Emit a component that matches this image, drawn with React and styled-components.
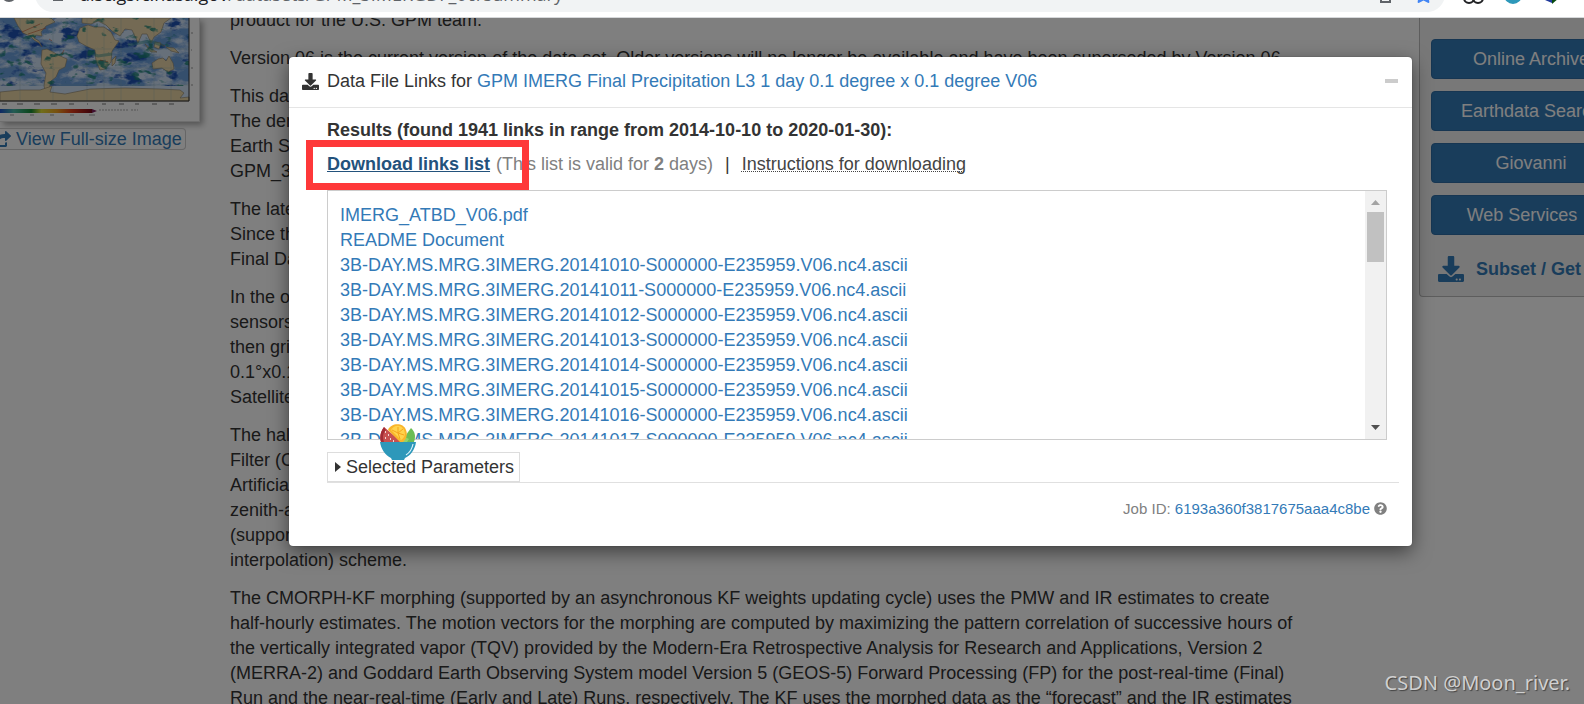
import React from "react";
import styled, { createGlobalStyle } from "styled-components";
import { FaDownload, FaQuestionCircle, FaShareSquare, FaStar } from "react-icons/fa";

const GlobalStyle = createGlobalStyle`
  *, *::before, *::after { box-sizing: border-box; }
  body {
    margin: 0;
    font-family: "Liberation Sans", Arial, sans-serif;
    font-size: 18px;
    line-height: 25px;
    color: #333;
    background: #fff;
  }
  a { color: #337ab7; text-decoration: none; }
  button { font: inherit; cursor: pointer; }
`;

const Window = styled.div`
  height: 100vh;
  display: flex;
  flex-direction: column;
  overflow: hidden;
`;

/* ---------- browser toolbar ---------- */

const BrowserBar = styled.header`
  flex: none;
  height: 18px;
  display: flex;
  align-items: flex-end;
  overflow: hidden;
  background: #fff;
  border-bottom: 1px solid #d6d8da;
`;

const BarIcons = styled.div`
  flex: none;
  width: ${(p) => p.$width}px;
  height: 36px;
`;

const AddressPill = styled.div`
  flex: 1;
  min-width: 0;
  height: 36px;
  margin-bottom: 5px;
  padding: 0 12px 0 16px;
  display: flex;
  align-items: center;
  gap: 14px;
  border-radius: 18px;
  background: #f1f3f4;
`;

const Address = styled.span`
  flex: 1;
  font-family: "Open Sans", "Noto Sans", sans-serif;
  font-size: 18px;
  color: #5f6368;
  white-space: nowrap;
`;

const Host = styled.span`
  color: #202124;
`;

const PillActions = styled.div`
  display: flex;
  align-items: center;
  gap: 22px;
`;

/* ---------- page ---------- */

const Viewport = styled.main`
  flex: 1;
  position: relative;
  overflow: hidden;
`;

const Page = styled.div`
  display: flex;
  align-items: flex-start;
`;

const PreviewColumn = styled.aside`
  flex: none;
  width: 230px;
`;

const Thumbnail = styled.div`
  width: 200px;
  height: 104px;
  background: #fff;
  border-right: 1px solid #ddd;
  border-bottom: 1px solid #ddd;
  box-shadow: 3px 3px 6px #aaa;
`;

const FullSizeLink = styled.a`
  display: flex;
  align-items: center;
  gap: 5px;
  width: 186px;
  height: 22px;
  margin-top: 6px;
  overflow: hidden;
  border: 1px solid #ccc;
  border-left: 0;
  border-radius: 0 4px 4px 0;
  white-space: nowrap;
  svg { flex: none; width: 18px; height: 18px; margin-left: -7px; }
`;

const Article = styled.article`
  flex: 1;
  min-width: 0;
  margin-top: -10px;
  p { margin: 0 0 13px; }
`;

const Line = styled.span`
  display: block;
  white-space: nowrap;
`;

const Sidebar = styled.aside`
  flex: none;
  width: 165px;
  height: 279px;
  padding: 21px 0 0 11px;
  background: #f0f0f0;
  border: 1px solid #bbb;
  border-width: 0 0 1px 1px;
  border-bottom-left-radius: 4px;
  overflow: hidden;
`;

const SidebarStack = styled.div`
  width: 200px;
  display: flex;
  flex-direction: column;
  gap: 12px;
`;

const AccessButton = styled.button`
  display: flex;
  align-items: center;
  justify-content: center;
  gap: 8px;
  height: 40px;
  padding: 0;
  color: #fff;
  background: #337ab7;
  border: 1px solid #2e6da4;
  border-radius: 4px;
`;

const Caret = styled.span`
  border: 5px solid transparent;
  border-top-color: #fff;
  border-bottom: 0;
`;

const SubsetLink = styled.a`
  display: flex;
  align-items: center;
  gap: 12px;
  height: 44px;
  padding-left: 7px;
  font-weight: bold;
  white-space: nowrap;
  svg { width: 26px; height: 26px; }
`;

/* ---------- modal ---------- */

const Backdrop = styled.div`
  position: absolute;
  inset: 0;
  padding: 39px 172px 0 289px;
  background: rgba(0, 0, 0, 0.5);
`;

const Modal = styled.section`
  background: #fff;
  border-radius: 4px;
  box-shadow: 0 6px 19px rgba(0, 0, 0, 0.5), 0 0 1px rgba(0, 0, 0, 0.6);
`;

const ModalHeader = styled.div`
  display: flex;
  align-items: center;
  gap: 8px;
  height: 51px;
  padding: 0 14px 2px 13px;
  border-bottom: 1px solid #e5e5e5;
  > svg { width: 17px; height: 17px; }
`;

const ModalTitle = styled.h4`
  flex: 1;
  margin: 0;
  font-size: inherit;
  font-weight: normal;
`;

const MinimizeButton = styled.button`
  width: 13px;
  height: 4px;
  padding: 0;
  border: 0;
  background: #ccc;
`;

const ModalBody = styled.div`
  padding: 10px 25px 25px 38px;
`;

const Results = styled.div`
  font-weight: bold;
`;

const DownloadRow = styled.div`
  position: relative;
  display: flex;
  align-items: center;
  height: 25px;
  margin: 9px 0 13px;
  white-space: pre;
`;

const DownloadLink = styled.a`
  margin-right: 6px;
  font-weight: bold;
  color: #23527c;
  text-decoration: underline;
`;

const Muted = styled.span`
  color: #808080;
`;

const Separator = styled.span`
  margin: 0 12px;
`;

const Instructions = styled.a`
  color: #444;
  text-decoration: underline dotted 1px;
  text-decoration-skip-ink: none;
`;

const Highlight = styled.div`
  position: absolute;
  top: -12px;
  left: -21px;
  width: 223px;
  height: 50px;
  border: 7px solid #fe3839;
  pointer-events: none;
`;

const LinkBox = styled.div`
  position: relative;
  display: flex;
  height: 250px;
  border: 1px solid #ccc;
`;

const LinkList = styled.ul`
  flex: 1;
  margin: 0;
  padding: 12px 13px 0 12px;
  list-style: none;
  overflow: hidden;
`;

const Scrollbar = styled.div`
  width: 21px;
  display: flex;
  flex-direction: column;
  align-items: center;
  background: #f1f1f1;
  svg { width: 9px; height: 5px; margin: 9px 0 7px; }
  svg:last-child { margin: auto 0 9px; }
`;

const Thumb = styled.div`
  width: 17px;
  height: 50px;
  background: #c1c1c1;
`;

const Bowl = styled.svg`
  position: absolute;
  left: 52px;
  top: 233px;
  width: 36px;
  height: 36px;
`;

const ParametersRow = styled.div`
  margin: 12px -12px 13px 0;
  border-bottom: 1px solid #e0e0e0;
`;

const ParametersButton = styled.button`
  display: flex;
  align-items: center;
  gap: 5px;
  height: 30px;
  padding: 0 5px 0 7px;
  color: #333;
  background: #fff;
  border: 1px solid #ddd;
  svg { width: 6px; height: 10px; }
`;

const JobRow = styled.div`
  display: flex;
  align-items: center;
  justify-content: flex-end;
  gap: 4px;
  font-size: 15px;
  color: #808080;
  svg { width: 13px; height: 13px; }
`;

const Watermark = styled.div`
  position: absolute;
  right: 14px;
  bottom: 9px;
  font-family: "Noto Sans", sans-serif;
  font-size: 20px;
  color: #d0d0d0;
  text-shadow: 1px 1px 1px #444;
`;

/* ---------- data ---------- */

const PARAGRAPHS = [
  ["product for the U.S. GPM team."],
  [
    "Version 06 is the current version of the data set. Older versions will no longer be available and have been superseded by Version 06.",
  ],
  [
    "This dataset is the GPM Level 3 IMERG Final Daily 10 x 10 km derived from the half-hourly GPM_3IMERGHH.",
    "The derived result represents the final estimate of the daily accumulated precipitation at the NASA Goddard",
    "Earth Sciences Data and Information Services Center by summing the valid precipitation retrievals in",
    "GPM_3IMERGHH and giving the result in mm.",
  ],
  [
    "The latency of the derived Final Daily product depends on the delivery of the IMERG Final product.",
    "Since the target latency for the Final is 3.5 months, it is also the latency of the",
    "Final Daily product.",
  ],
  [
    "In the original IMERG algorithm, the precipitation estimates from the various passive microwave",
    "sensors comprising the GPM constellation are computed using the Goddard Profiling Algorithm,",
    "then gridded and intercalibrated to the GPM Combined product, and combined into half-hourly",
    "0.1°x0.1° fields calibrated with the Global Precipitation Climatology Project",
    "Satellite-Gauge product.",
  ],
  [
    "The half-hourly intercalibrated estimates are then input to both the CPC Morphing-Kalman",
    "Filter (CMORPH-KF) time interpolation scheme and the estimation scheme using",
    "Artificial Neural Networks. In parallel, CPC assembles the",
    "zenith-angle-corrected, intercalibrated geo-IR fields for use in both schemes",
    "(supported by an asynchronous weights updating cycle and time",
    "interpolation) scheme.",
  ],
  [
    "The CMORPH-KF morphing (supported by an asynchronous KF weights updating cycle) uses the PMW and IR estimates to create",
    "half-hourly estimates. The motion vectors for the morphing are computed by maximizing the pattern correlation of successive hours of",
    "the vertically integrated vapor (TQV) provided by the Modern-Era Retrospective Analysis for Research and Applications, Version 2",
    "(MERRA-2) and Goddard Earth Observing System model Version 5 (GEOS-5) Forward Processing (FP) for the post-real-time (Final)",
    "Run and the near-real-time (Early and Late) Runs, respectively. The KF uses the morphed data as the “forecast” and the IR estimates",
  ],
];

const ACCESS = [
  { label: "Online Archive" },
  { label: "Earthdata Search" },
  { label: "Giovanni" },
  { label: "Web Services", menu: true },
];

const FILES = [
  "IMERG_ATBD_V06.pdf",
  "README Document",
  ...[10, 11, 12, 13, 14, 15, 16, 17].map(
    (day) => `3B-DAY.MS.MRG.3IMERG.201410${day}-S000000-E235959.V06.nc4.ascii`
  ),
];

/* ---------- drawings ---------- */

function PrecipitationMap() {
  return (
    <svg width="199" height="103" viewBox="0 0 199 103" aria-label="Precipitation map">
      <defs>
        <filter id="rain" x="0" y="0" width="100%" height="100%" colorInterpolationFilters="sRGB">
          <feTurbulence type="fractalNoise" baseFrequency="0.04 0.08" numOctaves="5" seed="8" />
          <feColorMatrix values="0 0 0 0 0.42  0 0 0 0 0.62  0 0 0 0 0.86  5 0 0 0 -1.9" />
        </filter>
        <filter id="storm" x="0" y="0" width="100%" height="100%" colorInterpolationFilters="sRGB">
          <feTurbulence type="fractalNoise" baseFrequency="0.05 0.09" numOctaves="4" seed="3" />
          <feColorMatrix values="0 0 0 0 0.12  0 0 0 0 0.32  0 0 0 0 0.7  7 0 0 0 -4.1" />
        </filter>
        <filter id="heavy" x="0" y="0" width="100%" height="100%" colorInterpolationFilters="sRGB">
          <feTurbulence type="fractalNoise" baseFrequency="0.07 0.12" numOctaves="3" seed="21" />
          <feColorMatrix values="0 0 0 0 0.1  0 0 0 0 0.5  0 0 0 0 0.45  0 9 0 0 -5.5" />
        </filter>
        <linearGradient id="scale">
          <stop offset="0" stopColor="#1c50c8" />
          <stop offset=".15" stopColor="#49b8a8" />
          <stop offset=".34" stopColor="#168b32" />
          <stop offset=".45" stopColor="#e0dc35" />
          <stop offset=".62" stopColor="#f0a020" />
          <stop offset=".78" stopColor="#e03a18" />
          <stop offset="1" stopColor="#780818" />
        </linearGradient>
      </defs>
      <rect width="189" height="83" fill="#cfe0f5" />
      <rect width="189" height="68" filter="url(#rain)" />
      <rect width="189" height="68" filter="url(#storm)" />
      <g fill="#e8d5a8" stroke="#8b8069" strokeWidth=".6">
        <path d="M14 0 18 8 23 15 30 18 34 22 39 25 42 29 39 23 34 20 36 17 42 18 41 14 46 8 55 4 51 0Z" />
        <path d="M42 32 47 31 53 34 58 37 67 41 65 49 59 52 56 59 51 63 49 71 46 75 44 68 46 55 41 46Z" />
        <path d="M80 10 88 7 94 9 104 9 111 14 115 22 119 23 112 33 111 44 105 51 100 52 96 43 95 32 86 28 79 24 77 18Z" />
        <path d="M82 0 82 5 91 6 98 3 106 7 112 13 120 18 125 11 132 12 138 25 142 16 147 16 151 25 154 19 161 14 164 5 171 0Z" />
        <path d="M112 42 116 38 115 45 112 48ZM145 26 151 31 157 34 151 34ZM155 24 161 25 159 31 154 29ZM166 29 174 30 179 35 171 33Z" />
        <path d="M152 45 158 41 163 40 166 43 169 38 173 45 174 51 168 54 162 50 153 51Z" />
      </g>
      <rect width="189" height="68" filter="url(#heavy)" opacity=".8" />
      <path d="M160 26 165 28M62 36 64 32M49 21 52 23M22 14 40 6M28 16 46 10M100 42 108 44" stroke="#c05a3a" strokeWidth="1" opacity=".6" />
      <path d="M88 34 98 38 112 36M96 47 106 43M128 27 150 23 164 28" fill="none" stroke="#2b8a8a" strokeWidth="3" opacity=".45" />
      <path d="M0 74 20 72 40 72 52 68 50 74 65 76 90 71 125 70 160 71 180 72 184 75 180 80 189 79V83H0Z" fill="#e9d5a5" stroke="#8a8068" strokeWidth=".6" />
      <path d="M20 0V83M53 0V83M87 0V83M104 0V83M121 0V83M154 0V83M171 0V83M0 31H189M0 50H189M0 67H189" stroke="#8aa" strokeWidth=".3" />
      <path d="M189 0V83H0" fill="none" stroke="#333" strokeWidth="1" />
      <path d="M2 86H7M17 86H23M34 86H40M51 86H57M69 86H74M87 86H88M102 86H106M119 86H124M135 86H139M152 86H157M169 86H174" stroke="#777" />
      <path d="M191 15H193M191 32H192M191 50H193M191 67H193" stroke="#999" />
      <rect y="91" width="92" height="4" fill="url(#scale)" />
      <path d="M92 91 97 93 92 95Z" fill="#802060" />
      <path d="M10 97H14M30 97H34M50 97H54M70 97H74M89 97H95" stroke="#999" />
      <path d="M99 92H128M131 92H138" stroke="#aaa" strokeDasharray="2 1" />
    </svg>
  );
}

function BowlIcon() {
  return (
    <Bowl viewBox="0 0 36 36" aria-hidden="true">
      <path d="M4 3C0 8-1 15 2 20H24Z" fill="#c75050" />
      <path d="M4 3C0 8-1 15 2 20L4 18C2 13 3 9 6 6Z" fill="#a32c35" />
      <path d="M31 4 21 18H34C36 12 35 8 31 4Z" fill="#6cbd55" />
      <path d="M31 4 25 13 29 15 27 18H21Z" fill="#91d36a" />
      <path d="M8 6C11-1 23-2 26 6 28 11 26 16 23 18H20Z" fill="#f9b52b" />
      <path d="M11 6C14 1 21 0 24 6 26 11 24 14 21 16Z" fill="#ffd34d" />
      <path d="M18 9V3M18 9 12 6M18 9 23 5M18 9 24 11M18 9 20 15" stroke="#f6a51d" />
      <path d="M5 8H6M8 11H9M5 14H6M10 15H11M13 17H14" stroke="#fff" strokeWidth="1.4" />
      <path d="M0 18H36C35 26 30 32 25 34L24 36H12L11 34C5 31 1 25 0 18Z" fill="#2d98ba" />
      <path d="M33 20C32 26 29 29 26 31" fill="none" stroke="#d7f2fb" strokeWidth="1.2" />
    </Bowl>
  );
}

function BrowserToolbar() {
  return (
    <BrowserBar>
      <BarIcons $width={35}>
        <svg width="35" height="36" fill="none" stroke="#5f6368" strokeWidth="2">
          <circle cx="9" cy="13" r="7" />
        </svg>
      </BarIcons>
      <AddressPill>
        <svg width="14" height="18" viewBox="0 0 14 18" fill="#5f6368">
          <path d="M2 7H12V16H2ZM4 7V4A3 3 0 0 1 10 4V7H8V4A1 1 0 0 0 6 4V7Z" />
        </svg>
        <Address>
          <Host>disc.gsfc.nasa.gov</Host>/datasets/GPM_3IMERGDF_06/summary
        </Address>
        <PillActions>
          <svg width="20" height="20">
            <path d="M0 0H12V16L8 13H0Z" fill="#5f6368" />
            <path d="M9 5H18V18H9Z" fill="#f1f3f4" stroke="#5f6368" strokeWidth="2" />
          </svg>
          <FaStar size={19} color="#4285f4" />
        </PillActions>
      </AddressPill>
      <BarIcons $width={139}>
        <svg width="139" height="36">
          <g fill="none" stroke="#202124" strokeWidth="2">
            <circle cx="24" cy="17" r="5" />
            <circle cx="33" cy="17" r="5" />
          </g>
          <circle cx="68" cy="14" r="9" fill="#2d98ba" />
          <path d="M100 19 107 22 107 15Z" fill="#203a9c" />
          <path d="M107 23 114 17 107 15Z" fill="#074a10" />
        </svg>
      </BarIcons>
    </BrowserBar>
  );
}

function DataLinksModal() {
  return (
    <Modal role="dialog" aria-labelledby="links-title">
      <ModalHeader>
        <FaDownload />
        <ModalTitle id="links-title">
          Data File Links for{" "}
          <a href="#dataset">GPM IMERG Final Precipitation L3 1 day 0.1 degree x 0.1 degree V06</a>
        </ModalTitle>
        <MinimizeButton aria-label="Minimize" />
      </ModalHeader>
      <ModalBody>
        <Results>Results (found 1941 links in range from 2014-10-10 to 2020-01-30):</Results>
        <DownloadRow>
          <DownloadLink href="#list">Download links list</DownloadLink>
          <Muted>
            (This list is valid for <b>2</b> days)
          </Muted>
          <Separator>|</Separator>
          <Instructions href="#instructions">Instructions for downloading</Instructions>
          <Highlight />
        </DownloadRow>
        <LinkBox>
          <LinkList>
            {FILES.map((name) => (
              <li key={name}>
                <a href={`#${name}`}>{name}</a>
              </li>
            ))}
          </LinkList>
          <Scrollbar aria-hidden="true">
            <svg viewBox="0 0 9 5"><path d="M0 5 4.5 0 9 5Z" fill="#a3a3a3" /></svg>
            <Thumb />
            <svg viewBox="0 0 9 5"><path d="M0 0H9L4.5 5Z" fill="#505050" /></svg>
          </Scrollbar>
          <BowlIcon />
        </LinkBox>
        <ParametersRow>
          <ParametersButton>
            <svg viewBox="0 0 6 10"><path d="M0 0 6 5 0 10Z" fill="#333" /></svg>
            Selected Parameters
          </ParametersButton>
        </ParametersRow>
        <JobRow>
          <span>
            Job ID: <a href="#job">6193a360f3817675aaa4c8be</a>
          </span>
          <FaQuestionCircle />
        </JobRow>
      </ModalBody>
    </Modal>
  );
}

export default function App() {
  return (
    <Window>
      <GlobalStyle />
      <BrowserToolbar />
      <Viewport>
        <Page>
          <PreviewColumn>
            <Thumbnail>
              <PrecipitationMap />
            </Thumbnail>
            <FullSizeLink href="#full">
              <FaShareSquare />
              View Full-size Image
            </FullSizeLink>
          </PreviewColumn>
          <Article>
            {PARAGRAPHS.map((lines) => (
              <p key={lines[0]}>
                {lines.map((line) => (
                  <Line key={line}>{line}</Line>
                ))}
              </p>
            ))}
          </Article>
          <Sidebar>
            <SidebarStack>
              {ACCESS.map(({ label, menu }) => (
                <AccessButton key={label}>
                  {label}
                  {menu && <Caret />}
                </AccessButton>
              ))}
              <SubsetLink href="#subset">
                <FaDownload />
                Subset / Get Data
              </SubsetLink>
            </SidebarStack>
          </Sidebar>
        </Page>
        <Backdrop>
          <DataLinksModal />
        </Backdrop>
        <Watermark>CSDN @Moon_river.</Watermark>
      </Viewport>
    </Window>
  );
}
